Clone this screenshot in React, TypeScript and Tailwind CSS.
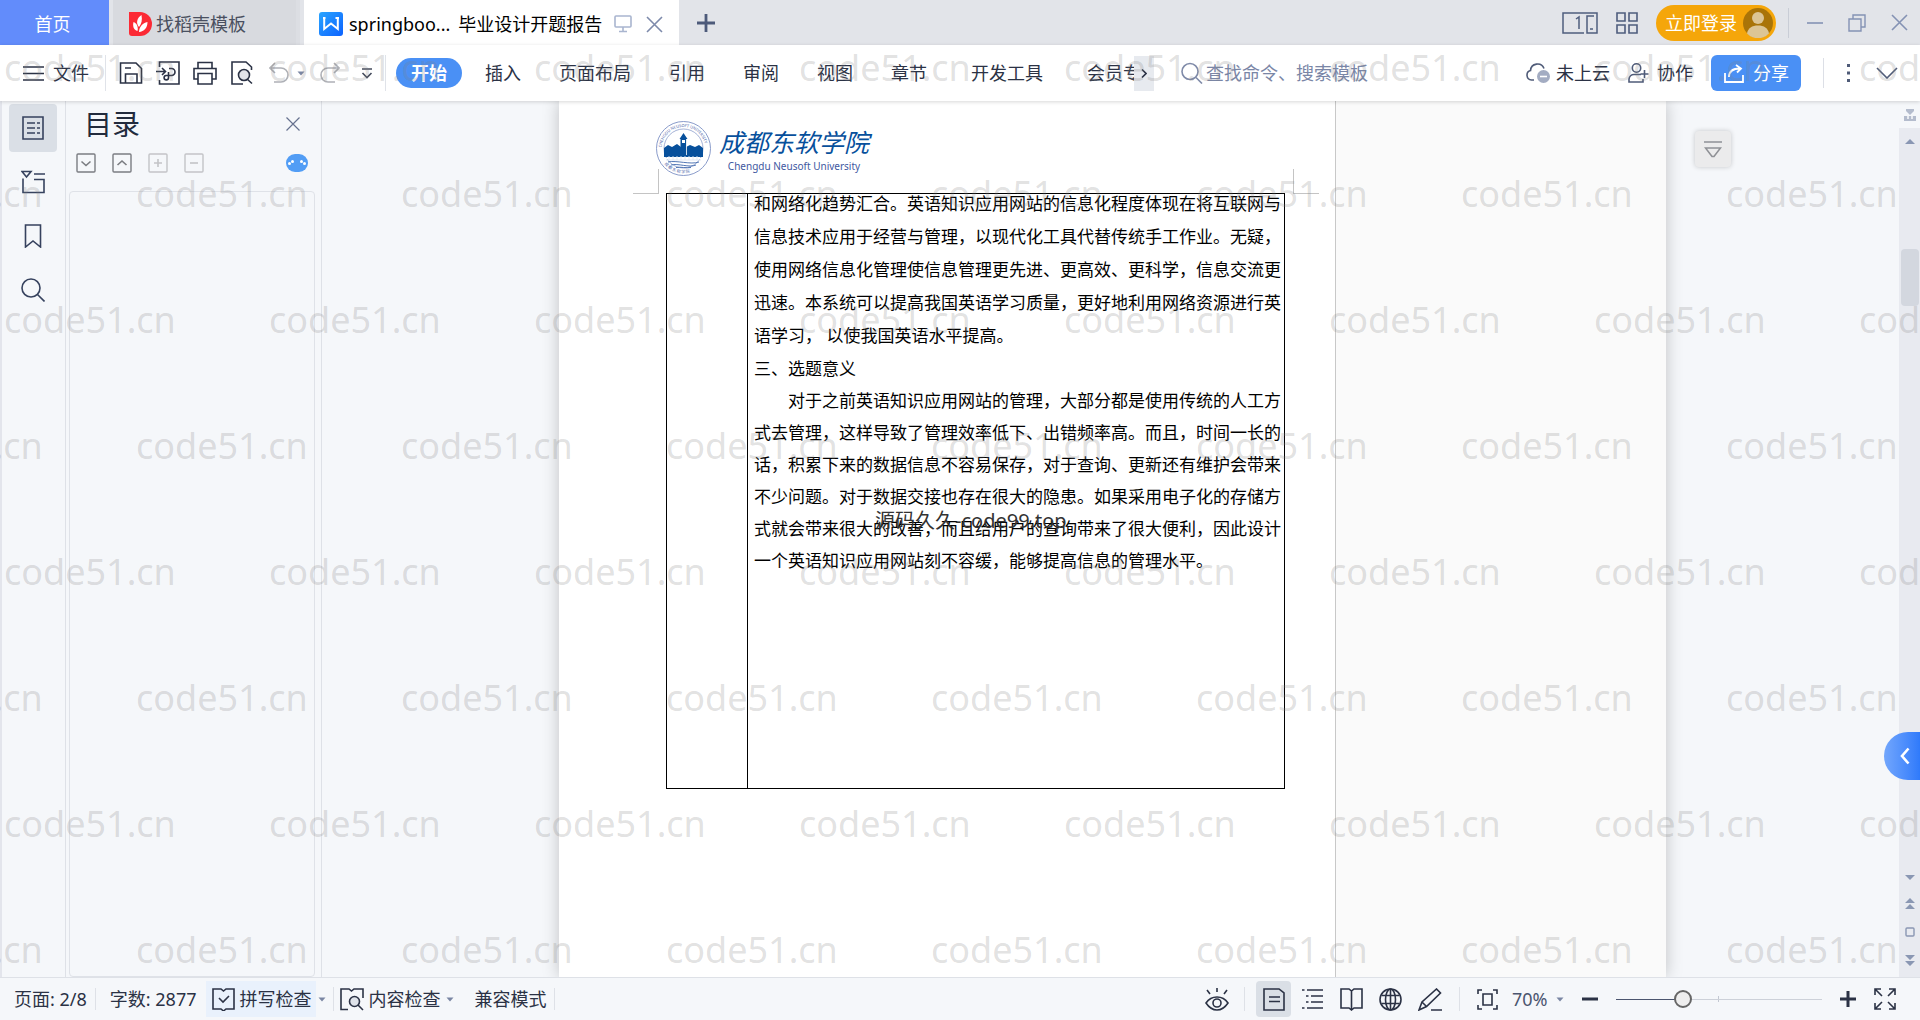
import { useState } from "react";
import type { ReactNode } from "react";

type IconProps = {
    w: number;
    h: number;
    className?: string;
    children: ReactNode;
};

// Small wrapper so every line icon shares the same stroke settings
function Icon({ w, h, className = "", children }: IconProps) {
    return (
        <svg
            width={w}
            height={h}
            viewBox={`0 0 ${w} ${h}`}
            fill="none"
            stroke="currentColor"
            strokeWidth="1.6"
            className={`shrink-0 ${className}`}
            aria-hidden="true"
        >
            {children}
        </svg>
    );
}

function Caret() {
    return (
        <Icon w={8} h={5} className="text-[#7a86a3]">
            <path d="M0.5 0.5h7L4 4.5z" fill="currentColor" stroke="none" />
        </Icon>
    );
}

const menuTabs = ["插入", "页面布局", "引用", "审阅", "视图", "章节"];

const intro = [
    "和网络化趋势汇合。英语知识应用网站的信息化程度体现在将互联网与",
    "信息技术应用于经营与管理，以现代化工具代替传统手工作业。无疑，",
    "使用网络信息化管理使信息管理更先进、更高效、更科学，信息交流更",
    "迅速。本系统可以提高我国英语学习质量，更好地利用网络资源进行英",
    "语学习， 以使我国英语水平提高。",
];

const meaning = [
    "对于之前英语知识应用网站的管理，大部分都是使用传统的人工方",
    "式去管理，这样导致了管理效率低下、出错频率高。而且，时间一长的",
    "话，积累下来的数据信息不容易保存，对于查询、更新还有维护会带来",
    "不少问题。对于数据交接也存在很大的隐患。如果采用电子化的存储方",
    "式就会带来很大的改善，而且给用户的查询带来了很大便利，因此设计",
    "一个英语知识应用网站刻不容缓，能够提高信息的管理水平。",
];

function TitleBar() {
    return (
        <header className="flex h-[45px] shrink-0 items-stretch gap-1 bg-[#e2e4e9]">
            <button className="w-[109px] bg-[#628cfb] pt-[3px] pr-1 text-white">首页</button>
            <button className="flex w-[187px] items-center gap-1 border-r-4 border-[#dcdee3] bg-[#d8dadf] pt-[3px] pl-4 text-[#4a5060]">
                <svg width="23" height="24" viewBox="0 0 23 24" aria-hidden="true">
                    <path d="M0 0h11a12 12 0 0 1 0 24H3a3 3 0 0 1-3-3z" fill="#fc2a35" />
                    <path d="M10 15C6.500 11 8 6 12.500 3c1 5 0 9-2.500 12z" fill="#fff" />
                    <path d="M8.500 19c-4-1-5-5-4-9 3 1 5 4.500 4 9z" fill="#fff" />
                    <path d="M10 20c0-5 3.500-9 8.500-10 0 6-3.500 9.500-8.500 10z" fill="#fff" />
                </svg>
                找稻壳模板
            </button>
            <div className="flex w-[375px] items-center gap-[6px] bg-white pt-[3px] pl-[15px] text-black">
                <svg width="24" height="24" viewBox="0 0 24 24" className="shrink-0" aria-hidden="true">
                    <defs>
                        <linearGradient id="writer" x1="0" y1="0" x2="1" y2="1">
                            <stop offset="0" stopColor="#2aa5ff" />
                            <stop offset="1" stopColor="#0c62ff" />
                        </linearGradient>
                    </defs>
                    <rect width="24" height="24" rx="3" fill="url(#writer)" />
                    <path d="M4 6h2.500M5.200 6v11L12 11.500 18.800 17V6M16.500 6H20" fill="none" stroke="#fff" strokeWidth="2" />
                </svg>
                <div className="flex gap-2 whitespace-nowrap">
                    <span>springboo...</span>
                    <span>毕业设计开题报告</span>
                </div>
                <div className="flex items-center gap-[14px] pl-[6px] text-[#a9b5cf]">
                    <Icon w={18} h={18}>
                        <rect x="1" y="1" width="16" height="11" rx="1" />
                        <path d="M9 12v4M5 16.500h8" />
                    </Icon>
                    <button aria-label="关闭标签" className="text-[#7d8aab]">
                        <Icon w={17} h={17}>
                            <path d="M1 1l15 15M16 1L1 16" />
                        </Icon>
                    </button>
                </div>
            </div>
            <button aria-label="新建标签" className="pl-[14px] text-[#4d5a7a]">
                <Icon w={18} h={18}>
                    <path d="M9 0v18M0 9h18" strokeWidth="2.800" />
                </Icon>
            </button>

            {/* Window controls */}
            <div className="ml-auto flex items-center gap-[18px] pr-3 text-[#4f5d7e]">
                <button aria-label="并排">
                    <Icon w={36} h={22}>
                        <path d="M22 21H1V1h34v20H25V4h7" strokeWidth="1.500" />
                        <path d="M14 7l3-2v12M28 17h3" strokeWidth="1.500" />
                    </Icon>
                </button>
                <button aria-label="应用">
                    <Icon w={22} h={22}>
                        <path d="M1 1h8v8H1zM13 1h8v8h-8zM1 13h8v8H1zM13 13h8v8h-8z" />
                    </Icon>
                </button>
                <div className="flex items-center gap-3">
                    <button className="flex h-9 items-center gap-[6px] rounded-full bg-[#f5a60a] pr-[3px] pl-[9px] text-white">
                        立即登录
                        <svg width="30" height="30" viewBox="0 0 30 30" aria-hidden="true">
                            <circle cx="15" cy="15" r="15" fill="#a97408" />
                            <circle cx="15" cy="10" r="6" fill="#dcc595" />
                            <path d="M4 25.500C5 20 9 17.500 15 17.500s10 2.500 11 8a15 15 0 0 1-22 0z" fill="#dcc595" />
                        </svg>
                    </button>
                    <span className="h-[30px] w-px bg-[#c9cdd6]" />
                </div>
                <div className="flex items-center gap-[25px] text-[#8492b4]">
                    <button aria-label="最小化">
                        <Icon w={16} h={18}>
                            <path d="M0 9h16" />
                        </Icon>
                    </button>
                    <button aria-label="还原">
                        <Icon w={18} h={18}>
                            <path d="M1 5h12v12H1zM5 5V1h12v12h-4" strokeWidth="1.400" />
                        </Icon>
                    </button>
                    <button aria-label="关闭">
                        <Icon w={17} h={17}>
                            <path d="M1 1l15 15M16 1L1 16" />
                        </Icon>
                    </button>
                </div>
            </div>
        </header>
    );
}

const toolButton = "flex h-9 w-[37px] items-center justify-center";

function Toolbar() {
    return (
        <div className="relative z-10 flex h-14 shrink-0 items-center bg-white text-[#2b3245] shadow-[0_1px_4px_rgba(0,0,0,0.16)]">
            <button className="flex items-center gap-[9px] pr-4 pl-[23px]">
                <Icon w={21} h={15}>
                    <path d="M0 1h21M0 7.500h21M0 14h21" />
                </Icon>
                文件
            </button>
            <span className="h-9 w-px bg-[#e0e3e9]" />

            {/* Quick access */}
            <div className="flex items-center pl-[6px]">
                <button aria-label="保存" className={toolButton}>
                    <Icon w={24} h={22}>
                        <path d="M1.500 1h15.500l5.500 5.500V21h-21zM6.500 21v-9h11.500v9M6 6h6" />
                    </Icon>
                </button>
                <button aria-label="输出为PDF" className={toolButton}>
                    <Icon w={24} h={24}>
                        <path d="M3.500 6V1h19.500v22H3.500v-4M0 10.500h9M6 7l3.500 3.500L6 14" />
                        <path d="M13 7.500h2.500a3.500 3.500 0 0 1 0 7H10a2.200 2.200 0 1 0 2.500 2.200V11" />
                    </Icon>
                </button>
                <button aria-label="打印" className={toolButton}>
                    <Icon w={24} h={24}>
                        <path d="M5 7V1.500h14V7M5 18H1V7.500h22V18h-4M5 12.500h14V23H5z" />
                    </Icon>
                </button>
                <button aria-label="打印预览" className={toolButton}>
                    <Icon w={24} h={24}>
                        <path d="M13 23H2V1h14l5.500 5v3M17 18l5 4.500" />
                        <circle cx="14" cy="14" r="5.500" fill="#e2e4ea" />
                    </Icon>
                </button>
                <button aria-label="撤销" className={`${toolButton} text-[#aeb0b6]`}>
                    <Icon w={20} h={22}>
                        <path d="M6 1L1 6l5 5M1 6h11a7 7 0 0 1 0 14H5" />
                    </Icon>
                </button>
                <span className="w-[14px]">
                    <Caret />
                </span>
                <button aria-label="恢复" className={`${toolButton} text-[#aeb0b6]`}>
                    <Icon w={20} h={22}>
                        <path d="M14 1l5 5-5 5M19 6H8a7 7 0 0 0 0 14h7" />
                    </Icon>
                </button>
                <button aria-label="自定义" className={`${toolButton} text-[#444b5c]`}>
                    <Icon w={12} h={11}>
                        <path d="M1 1h10M1.500 5l4.500 4.500L10.500 5" />
                    </Icon>
                </button>
            </div>
            <span className="h-9 w-px bg-[#e0e3e9]" />

            {/* Ribbon tabs */}
            <nav className="flex items-center pl-[10px]">
                <button className="h-[30px] rounded-full bg-[#4a90f5] px-[15px] font-bold text-white">开始</button>
                <div className="flex gap-[38px] pl-[23px]">
                    {menuTabs.map((tab) => (
                        <button key={tab} className="whitespace-nowrap">
                            {tab}
                        </button>
                    ))}
                </div>
                <div className="flex gap-11 pl-11">
                    <button className="whitespace-nowrap">开发工具</button>
                    <button className="w-[47px] overflow-hidden text-left whitespace-nowrap">会员专享</button>
                </div>
                <button aria-label="更多选项卡" className="flex h-[35px] w-5 items-center justify-center bg-[#e7eaef]">
                    <Icon w={6} h={9}>
                        <path d="M1 0.500l4 4-4 4" />
                    </Icon>
                </button>
            </nav>

            <label className="flex min-w-0 flex-1 items-center gap-[3px] pl-[27px] text-[#7f8aa8]">
                <Icon w={22} h={22}>
                    <circle cx="9" cy="9.500" r="8" />
                    <path d="M15 15.500l6 6" />
                </Icon>
                <input
                    type="text"
                    aria-label="搜索"
                    placeholder="查找命令、搜索模板"
                    className="w-[240px] bg-transparent outline-none placeholder:text-[#7a86a6]"
                />
            </label>

            <div className="flex shrink-0 items-center gap-[18px] pr-[22px]">
                <button className="flex items-center gap-[6px]">
                    <Icon w={24} h={22} className="text-[#4f5b78]">
                        <path d="M8 18H5.500a4.800 4.800 0 0 1-1-9.400A7 7 0 0 1 18 6.500" />
                        <circle cx="17.500" cy="14.500" r="6.500" fill="#a3acc2" stroke="none" />
                        <path d="M14 14.500h7" stroke="#fff" />
                    </Icon>
                    未上云
                </button>
                <button className="flex items-center gap-2">
                    <Icon w={21} h={20} className="text-[#4f5b78]">
                        <circle cx="8.500" cy="5" r="4.200" />
                        <path d="M13 11.500H6A5 5 0 0 0 1 16v3h14v-3M12.500 11h8M16.500 7v8" />
                    </Icon>
                    协作
                </button>
                <button className="flex h-9 w-[90px] items-center gap-[9px] rounded-md bg-[#4a90f5] pl-[13px] text-white">
                    <Icon w={20} h={19}>
                        <path d="M1 9v9h18v-7M5 13c0-6 4-8.500 11-8.500M12 1l5 3.500-4 4" strokeWidth="1.800" />
                    </Icon>
                    分享
                </button>
                <div className="flex items-center gap-[22px] pl-1 text-[#4f5b78]">
                    <span className="h-[30px] w-px bg-[#dcdfe6]" />
                    <button aria-label="更多">
                        <Icon w={8} h={18}>
                            <path d="M1 0h3v3h-3zM1 7.500h3v3h-3zM1 15h3v3h-3z" fill="currentColor" stroke="none" />
                        </Icon>
                    </button>
                    <button aria-label="折叠功能区">
                        <Icon w={22} h={12}>
                            <path d="M1 1l10 10L21 1" />
                        </Icon>
                    </button>
                </div>
            </div>
        </div>
    );
}

const railButton = "flex size-12 items-center justify-center rounded-sm";

function SideRail() {
    return (
        <nav className="flex w-[66px] shrink-0 flex-col gap-[6px] border-r border-l-2 border-r-[#dee1e7] border-l-[#e3e5ec] pt-[3px] pl-[7px] text-[#36425e]">
            <button aria-label="目录" className={`${railButton} bg-[#dadfe6]`}>
                <Icon w={22} h={24}>
                    <path d="M1 1h20v22H1z" />
                    <path d="M5 7h8M5 12h8M5 17h8M15 7h3M15 12h3M15 17h3" />
                </Icon>
            </button>
            <button aria-label="章节" className={railButton}>
                <Icon w={24} h={24}>
                    <path d="M1 1.500h9L5.500 7zM13 4h11M13 9.500h10V22.500H2v-14" />
                </Icon>
            </button>
            <button aria-label="书签" className={railButton}>
                <Icon w={18} h={24}>
                    <path d="M1.500 1h15v22L9 17l-7.500 6z" />
                </Icon>
            </button>
            <button aria-label="查找" className={railButton}>
                <Icon w={24} h={24}>
                    <circle cx="10" cy="10" r="9" />
                    <path d="M16.500 16.500l7 7" />
                </Icon>
            </button>
        </nav>
    );
}

function OutlinePanel() {
    return (
        <aside className="flex w-64 shrink-0 flex-col border-r border-[#dee1e7] pr-[6px] pl-[3px]">
            <div className="flex h-[46px] items-center justify-between px-[15px]">
                <h2 className="text-[28px] text-[#222b3d]">目录</h2>
                <button aria-label="关闭目录" className="text-[#66718f]">
                    <Icon w={14} h={14}>
                        <path d="M0.500 0.500l13 13M13.500 0.500l-13 13" strokeWidth="1.200" />
                    </Icon>
                </button>
            </div>
            <div className="flex h-11 items-center gap-4 px-[7px] pb-3 text-[#7b7d82]">
                <button aria-label="展开">
                    <Icon w={20} h={20}>
                        <rect x="1" y="1" width="18" height="18" rx="1" strokeWidth="1.400" />
                        <path d="M5.500 8.500l4.500 4 4.500-4" />
                    </Icon>
                </button>
                <button aria-label="收起">
                    <Icon w={20} h={20}>
                        <rect x="1" y="1" width="18" height="18" rx="1" strokeWidth="1.400" />
                        <path d="M5.500 12l4.500-4 4.500 4" />
                    </Icon>
                </button>
                <button aria-label="新增" className="text-[#c3c4c7]">
                    <Icon w={20} h={20}>
                        <rect x="1" y="1" width="18" height="18" rx="1" strokeWidth="1.400" />
                        <path d="M6 10h8M10 6v8" />
                    </Icon>
                </button>
                <button aria-label="删除" className="text-[#c3c4c7]">
                    <Icon w={20} h={20}>
                        <rect x="1" y="1" width="18" height="18" rx="1" strokeWidth="1.400" />
                        <path d="M6 10h8" />
                    </Icon>
                </button>
                <button aria-label="智能目录" className="ml-auto">
                    <svg width="22" height="18" viewBox="0 0 22 18" aria-hidden="true">
                        <rect width="22" height="18" rx="9" fill="#529df5" />
                        <g fill="#fff">
                            <circle cx="3.500" cy="9.500" r="1.500" />
                            <circle cx="6.500" cy="7.500" r="1.500" />
                            <circle cx="15.500" cy="7.500" r="1.500" />
                            <circle cx="18.500" cy="9.500" r="1.500" />
                        </g>
                    </svg>
                </button>
            </div>
            <div className="flex-1 rounded-sm border border-[#dfe2e8]" />
        </aside>
    );
}

function SchoolEmblem() {
    return (
        <svg width="55" height="55" viewBox="0 0 55 55" aria-hidden="true">
            <circle cx="27.500" cy="27.500" r="27" fill="none" stroke="#7c90c4" strokeWidth="0.900" />
            <circle cx="27.500" cy="27.500" r="19.500" fill="none" stroke="#7c90c4" strokeWidth="0.700" />
            <path id="ringTop" d="M6.500 34.500a22 22 0 1 1 42 0" fill="none" />
            <path id="ringBottom" d="M5 38a25 25 0 0 0 45 0" fill="none" />
            <text fontSize="4" fill="#4a63a8" fontFamily="Noto Sans">
                <textPath href="#ringTop" startOffset="8">
                    CHENGDU NEUSOFT UNIVERSITY
                </textPath>
            </text>
            <text fontSize="4" fill="#4a63a8" fontFamily="Noto Sans CJK SC">
                <textPath href="#ringBottom" startOffset="6">
                    成 都 东 软 学 院
                </textPath>
            </text>
            <path d="M8 36v-9l4-3 4 2 5-3 4 3h5l4-2 5 2 4-2 4 3v9z" fill="#07509c" />
            <path d="M27.500 12l4 6h-1v17h-6V18h-1z" fill="#07509c" />
            <path d="M26 19h3v3h-3z" fill="#fff" />
            <path d="M30.500 18v16" stroke="#fff" strokeWidth="0.800" />
            <path d="M9 37.500h37" stroke="#fff" strokeWidth="1" />
            <path d="M10 39h35M13 35v4M17 35v4M21 35v4M25 35v4M29 35v4M33 35v4M37 35v4M41 35v4" stroke="#dfe7f4" strokeWidth="0.900" />
            <path d="M12 41c8-2 23 3 31 0M15 44c7-2 18 3 25 0M20 46.500c5-1 10 1 15 0" fill="none" stroke="#3d66ab" strokeWidth="0.900" />
        </svg>
    );
}

function DocumentPage() {
    return (
        <article className="relative w-[777px] shrink-0 border-r border-[#c8c8c8] bg-white">
            <div className="flex h-[92px] items-start gap-2 pt-5 pl-[97px]">
                <SchoolEmblem />
                <div className="pt-[3px] text-center">
                    <p className="text-[25px] leading-9 text-[#07509c] italic">成都东软学院</p>
                    <p className="text-[10px] leading-3 text-[#41589f]">Chengdu Neusoft University</p>
                </div>
            </div>

            <div className="relative ml-[107px] w-[619px]">
                {/* Margin crop marks */}
                <span className="absolute -top-6 -left-[33px] h-[25px] w-[26px] border-r border-b border-[#c4c4c4]" />
                <span className="absolute -top-6 -right-[34px] h-[25px] w-[26px] border-b border-l border-[#c4c4c4]" />
                <table className="w-full border-collapse">
                    <tbody>
                        <tr className="h-[595px] align-top">
                            <td className="w-[81px] border border-black" />
                            <td className="border border-black pl-[6px] text-[17px] whitespace-pre text-black">
                                <div className="-mt-[7px]">
                                    <div className="leading-[33px]">
                                        {intro.map((line) => (
                                            <p key={line}>{line}</p>
                                        ))}
                                        <h3>三、选题意义</h3>
                                    </div>
                                    <div className="leading-8">
                                        {meaning.map((line, i) => (
                                            <p key={line} className={i === 0 ? "pl-[34px]" : ""}>
                                                {line}
                                            </p>
                                        ))}
                                    </div>
                                </div>
                            </td>
                        </tr>
                    </tbody>
                </table>
            </div>

            <p className="absolute top-[405px] left-[316px] text-xl leading-[30px] whitespace-nowrap text-[#333]">
                源码久久-code99.top
            </p>
        </article>
    );
}

function ScrollColumn() {
    return (
        <div className="flex w-[21px] shrink-0 flex-col items-center text-[#8a97b3]">
            <div className="flex h-[27px] items-center">
                <Icon w={12} h={12}>
                    <path d="M2 0h8v2L6 6 2 2zM0 7h12v5H0z" fill="#b4bccd" stroke="none" />
                    <path d="M4 7v3M8 7v3" stroke="#f5f7fa" />
                </Icon>
            </div>
            <div className="relative flex w-full flex-1 flex-col items-center bg-[#e8eaf0] py-[11px]">
                <Icon w={10} h={5}>
                    <path d="M0 5l5-5 5 5z" fill="currentColor" stroke="none" />
                </Icon>
                <span className="mt-[105px] h-[57px] w-[18px] rounded-sm bg-[#d3d7df]" />
                <div className="mt-auto flex flex-col items-center gap-[18px]">
                    <Icon w={10} h={5}>
                        <path d="M0 0l5 5 5-5z" fill="currentColor" stroke="none" />
                    </Icon>
                    <Icon w={10} h={11}>
                        <path d="M0 5l5-5 5 5zM0 11l5-5 5 5z" fill="currentColor" stroke="none" />
                    </Icon>
                    <Icon w={10} h={10}>
                        <rect x="1" y="1" width="8" height="8" rx="1" strokeWidth="1.400" />
                    </Icon>
                    <Icon w={10} h={11}>
                        <path d="M0 0l5 5 5-5zM0 6l5 5 5-5z" fill="currentColor" stroke="none" />
                    </Icon>
                </div>
            </div>
        </div>
    );
}

const viewButton = "flex w-[39px] justify-center";

function StatusBar() {
    const [zoom, setZoom] = useState(31);

    return (
        <footer className="flex h-[43px] shrink-0 items-center justify-between border-t border-[#dee1e7] bg-[#f5f7fa] text-[#2b3245]">
            <div className="flex items-center whitespace-nowrap">
                <span className="border-r border-[#dee1e7] pr-2 pl-[14px] leading-[22px]">页面: 2/8</span>
                <span className="pr-[10px] pl-[14px]">字数: 2877</span>
                <button className="flex h-9 items-center gap-1 bg-[#e9f1fc] pr-[5px] pl-[6px]">
                    <Icon w={23} h={23}>
                        <path d="M1 1h8l2.500 2L14 1h8v20h-8l-2.500 2L9 21H1z" />
                        <path d="M7 10l4 4 6-6" />
                    </Icon>
                    拼写检查
                </button>
                <span className="flex h-6 w-[18px] items-center border-r border-[#dee1e7] pl-[2px]">
                    <Caret />
                </span>
                <button className="flex items-center gap-1 pl-[6px]">
                    <Icon w={24} h={23}>
                        <path d="M8 21.500H1V1h8l2.500 2L14 1h9v9M18 17l5 5" />
                        <circle cx="14.500" cy="13.500" r="5" fill="#dfe3ea" />
                    </Icon>
                    内容检查
                    <span className="flex pl-[2px]">
                        <Caret />
                    </span>
                </button>
                <span className="border-r border-[#dee1e7] pr-2 pl-5 leading-[22px]">兼容模式</span>
            </div>

            <div className="flex items-center pr-6">
                <button aria-label="护眼模式" className="pr-[15px]">
                    <Icon w={24} h={23}>
                        <path d="M1 15c3-4.500 7-6 11-6s8 1.500 11 6c-3 4.500-7 7-11 7s-8-2.500-11-7zM12 0v4M2 2l3 4M22 2l-3 4" />
                        <circle cx="12" cy="15" r="4" />
                    </Icon>
                </button>
                <span className="h-6 w-px bg-[#dee1e7]" />
                <button aria-label="页面视图" className="mr-[2px] ml-[11px] flex h-9 w-[35px] items-center justify-center rounded-sm bg-[#dadfe6]">
                    <Icon w={22} h={23}>
                        <path d="M1 1h15l5 4v17H1zM6 9h11M6 13.500h11" />
                    </Icon>
                </button>
                <button aria-label="大纲视图" className={viewButton}>
                    <Icon w={21} h={22}>
                        <path d="M5 2h16M9 8h12M9 14h12M5 20h16M0 2h2.500M4 8h2.500M4 14h2.500M0 20h2.500" />
                    </Icon>
                </button>
                <button aria-label="阅读版式" className={viewButton}>
                    <Icon w={23} h={23}>
                        <path d="M1 1h8l2.500 2L14 1h8v19h-8l-2.500 2L9 20H1zM11.500 3v18" />
                    </Icon>
                </button>
                <button aria-label="Web版式" className={viewButton}>
                    <Icon w={23} h={23}>
                        <circle cx="11.500" cy="11.500" r="10.500" />
                        <ellipse cx="11.500" cy="11.500" rx="5" ry="10.500" />
                        <path d="M2.500 7.500h18M2.500 15.500h18M11.500 1v21" />
                    </Icon>
                </button>
                <button aria-label="写作模式" className={viewButton}>
                    <Icon w={24} h={23}>
                        <path d="M1 22l3-8L18.500 1l4 4L8.500 18.500zM4 14l4.500 4.500M13 22h11" />
                    </Icon>
                </button>
                <span className="mr-[17px] ml-[10px] h-6 w-px bg-[#dee1e7]" />
                <button aria-label="适应窗口">
                    <Icon w={21} h={21}>
                        <path d="M1 5V1h4M16 1h4v4M20 16v4h-4M5 20H1v-4M6 5h9v11H6z" />
                    </Icon>
                </button>
                <label className="flex items-center gap-1 pl-[14px]">
                    <select
                        aria-label="缩放比例"
                        className="w-10 appearance-none bg-transparent text-[#4b556f] outline-none"
                        defaultValue="70%"
                    >
                        <option>70%</option>
                        <option>100%</option>
                    </select>
                    <Caret />
                </label>
                <button aria-label="缩小" className="px-[18px]">
                    <Icon w={16} h={16}>
                        <path d="M0 8h16" strokeWidth="3" />
                    </Icon>
                </button>
                <div className="relative flex items-center">
                    <span className="absolute left-[102px] h-[6px] w-px bg-[#c3c8d2]" />
                    <input
                        type="range"
                        aria-label="缩放"
                        min={0}
                        max={100}
                        value={zoom}
                        onChange={(e) => setZoom(Number(e.target.value))}
                        className="relative h-5 w-[206px] appearance-none bg-transparent bg-[linear-gradient(to_right,#4b556f_33%,#cdd1d9_33%)] bg-[length:100%_1px] bg-center bg-no-repeat [&::-webkit-slider-thumb]:size-[18px] [&::-webkit-slider-thumb]:appearance-none [&::-webkit-slider-thumb]:rounded-full [&::-webkit-slider-thumb]:border-2 [&::-webkit-slider-thumb]:border-solid [&::-webkit-slider-thumb]:border-[#666] [&::-webkit-slider-thumb]:bg-[#eee]"
                    />
                </div>
                <button aria-label="放大" className="px-[18px]">
                    <Icon w={16} h={16}>
                        <path d="M0 8h16M8 0v16" strokeWidth="3" />
                    </Icon>
                </button>
                <button aria-label="全屏">
                    <Icon w={22} h={22}>
                        <path d="M1 7V1h6M1 1l7 7M15 1h6v6M21 1l-7 7M21 15v6h-6M21 21l-7-7M7 21H1v-6M1 21l7-7" />
                    </Icon>
                </button>
            </div>
        </footer>
    );
}

// Repeating site mark, every other row is shifted by half a step
function Watermark() {
    return (
        <div className="pointer-events-none absolute inset-0 z-20 overflow-hidden pt-[5px] text-4xl text-[#808080]/24" aria-hidden="true">
            {Array.from({ length: 8 }, (_, row) => (
                <div key={row} className={row % 2 === 0 ? "ml-1 flex h-[126px]" : "-ml-[129px] flex h-[126px]"}>
                    {Array.from({ length: 9 }, (_, col) => (
                        <span key={col} className="w-[265px] shrink-0 leading-[126px]">
                            code51.cn
                        </span>
                    ))}
                </div>
            ))}
        </div>
    );
}

export default function App() {
    return (
        <div className="relative flex h-screen flex-col overflow-hidden bg-[#f5f7fa] font-['Noto_Sans','Noto_Sans_CJK_SC',sans-serif] text-lg leading-7">
            <TitleBar />
            <Toolbar />

            <main className="relative flex min-h-0 flex-1">
                <SideRail />
                <OutlinePanel />

                {/* Document canvas */}
                <section className="relative flex min-w-0 flex-1 justify-center overflow-hidden pl-1">
                    <div className="flex w-[1107px] bg-[#fafafa] shadow-[0_0_16px_rgba(0,0,0,0.22)]">
                        <DocumentPage />
                    </div>
                    <button
                        aria-label="收起页眉"
                        className="absolute top-[30px] right-[168px] flex size-9 items-center justify-center rounded-sm bg-[#ebebec] text-[#8f9196] shadow-[0_0_5px_rgba(0,0,0,0.2)]"
                    >
                        <Icon w={18} h={17}>
                            <path d="M0 1h18M1.500 7h15L10 15.500H8z" />
                        </Icon>
                    </button>
                </section>

                <ScrollColumn />
                <button
                    aria-label="展开侧栏"
                    className="absolute top-[631px] right-0 flex h-12 w-9 items-center justify-center rounded-l-full bg-linear-to-r from-[#72a6fc] to-[#2f7afb] pl-[6px] text-white"
                >
                    <Icon w={10} h={18}>
                        <path d="M8.500 1.500L2 9l6.500 7.500" strokeWidth="2.600" />
                    </Icon>
                </button>
            </main>

            <StatusBar />
            <Watermark />
        </div>
    );
}
